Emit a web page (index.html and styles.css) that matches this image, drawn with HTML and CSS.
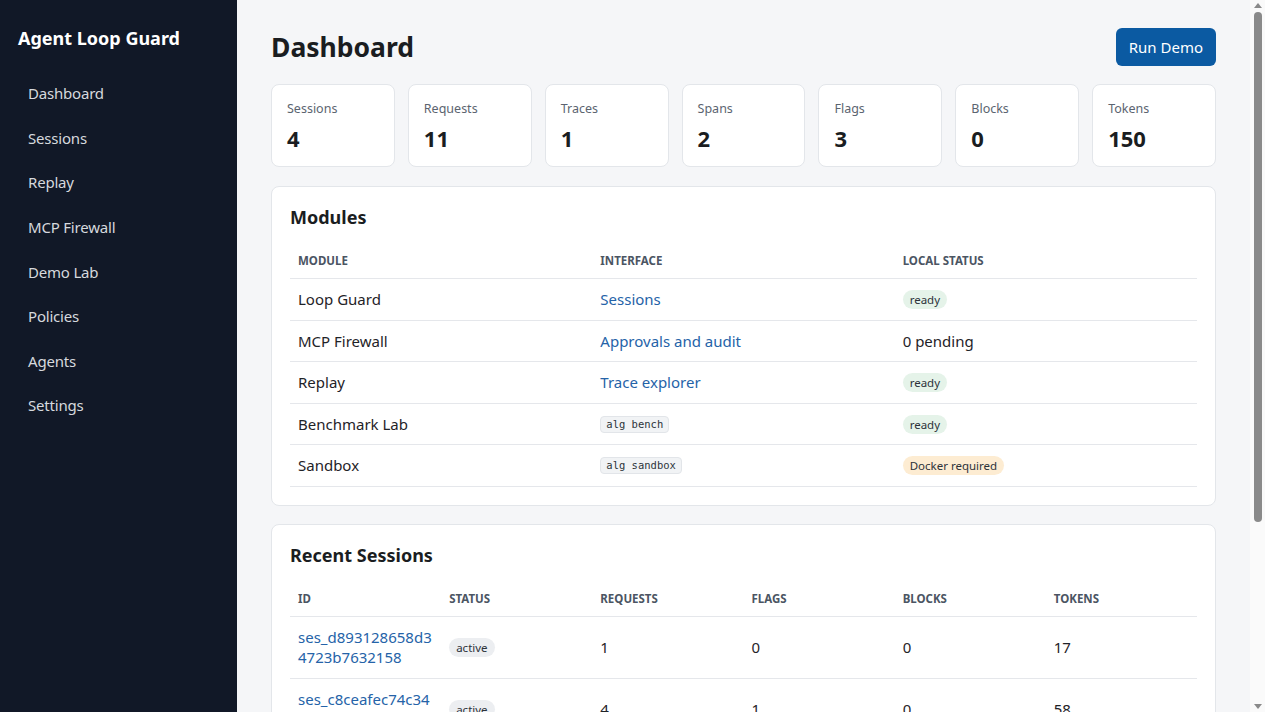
FILE: index.html
```html
<!DOCTYPE html>
<html lang="en">
<head>
    <meta charset="UTF-8">
    <meta name="viewport" content="width=device-width, initial-scale=1.0">
    <title>Agent Loop Guard</title>
    <link rel="stylesheet" href="styles.css">
</head>
<body>
    <div class="layout">
        <aside class="sidebar">
            <div class="brand">Agent Loop Guard</div>
            <nav class="nav">
                <a href="#">Dashboard</a>
                <a href="#">Sessions</a>
                <a href="#">Replay</a>
                <a href="#">MCP Firewall</a>
                <a href="#">Demo Lab</a>
                <a href="#">Policies</a>
                <a href="#">Agents</a>
                <a href="#">Settings</a>
            </nav>
        </aside>

        <main class="main">
            <div class="page-header">
                <h1>Dashboard</h1>
                <button type="button" class="btn">Run Demo</button>
            </div>

            <div class="stats">
                <div class="stat"><div class="stat-label">Sessions</div><div class="stat-value">4</div></div>
                <div class="stat"><div class="stat-label">Requests</div><div class="stat-value">11</div></div>
                <div class="stat"><div class="stat-label">Traces</div><div class="stat-value">1</div></div>
                <div class="stat"><div class="stat-label">Spans</div><div class="stat-value">2</div></div>
                <div class="stat"><div class="stat-label">Flags</div><div class="stat-value">3</div></div>
                <div class="stat"><div class="stat-label">Blocks</div><div class="stat-value">0</div></div>
                <div class="stat"><div class="stat-label">Tokens</div><div class="stat-value">150</div></div>
            </div>

            <section class="card">
                <h2>Modules</h2>
                <table class="table">
                    <thead>
                        <tr><th>Module</th><th>Interface</th><th>Local status</th></tr>
                    </thead>
                    <tbody>
                        <tr><td>Loop Guard</td><td><a href="#">Sessions</a></td><td><span class="badge ok">ready</span></td></tr>
                        <tr><td>MCP Firewall</td><td><a href="#">Approvals and audit</a></td><td>0 pending</td></tr>
                        <tr><td>Replay</td><td><a href="#">Trace explorer</a></td><td><span class="badge ok">ready</span></td></tr>
                        <tr><td>Benchmark Lab</td><td><code>alg bench</code></td><td><span class="badge ok">ready</span></td></tr>
                        <tr><td>Sandbox</td><td><code>alg sandbox</code></td><td><span class="badge warn">Docker required</span></td></tr>
                    </tbody>
                </table>
            </section>

            <section class="card">
                <h2>Recent Sessions</h2>
                <table class="table sessions">
                    <thead>
                        <tr><th>ID</th><th>Status</th><th>Requests</th><th>Flags</th><th>Blocks</th><th>Tokens</th></tr>
                    </thead>
                    <tbody>
                        <tr><td class="id"><a href="#">ses_d893128658d34723b7632158</a></td><td><span class="badge">active</span></td><td>1</td><td>0</td><td>0</td><td>17</td></tr>
                        <tr><td class="id"><a href="#">ses_c8ceafec74c34f9a81d2e6b0</a></td><td><span class="badge">active</span></td><td>4</td><td>1</td><td>0</td><td>58</td></tr>
                        <tr><td class="id"><a href="#">ses_5a7e09d41bc24e3f90a6c771</a></td><td><span class="badge">active</span></td><td>3</td><td>1</td><td>0</td><td>42</td></tr>
                        <tr><td class="id"><a href="#">ses_91f2b6c08e4d47a5b3e1d09c</a></td><td><span class="badge">active</span></td><td>3</td><td>1</td><td>0</td><td>33</td></tr>
                    </tbody>
                </table>
            </section>
        </main>
    </div>

    <!-- stand-in for the browser's scrollbar -->
    <div class="scrollbar">
        <span class="arrow up"></span>
        <span class="thumb"></span>
        <span class="arrow down"></span>
    </div>
</body>
</html>
```

FILE: styles.css
```css
* {
    box-sizing: border-box;
}

body {
    margin: 0;
    padding-right: 15px;
    font-family: "Noto Sans", "Open Sans", sans-serif;
    background: #f5f6f8;
    color: #1f2328;
}

.layout {
    display: flex;
    min-height: 100vh;
}

.sidebar {
    width: 237px;
    flex-shrink: 0;
    background: #111827;
    padding: 26px 18px;
    position: sticky;
    top: 0;
    height: 100vh;
}

.brand {
    color: #fff;
    font-size: 18px;
    font-weight: 700;
    line-height: 24px;
    margin-bottom: 21px;
}

.nav {
    display: flex;
    flex-direction: column;
}

.nav a {
    color: #d6d9de;
    text-decoration: none;
    font-size: 15px;
    line-height: 22px;
    padding: 11.3px 10px;
    letter-spacing: -0.2px;
}

.main {
    flex: 1;
    min-width: 0;
    padding: 28px 34px 34px;
}

.page-header {
    display: flex;
    justify-content: space-between;
    align-items: center;
    margin-bottom: 18px;
}

h1 {
    margin: 0;
    font-size: 26.5px;
    font-weight: 700;
    color: #1a1d21;
}

.btn {
    background: #0b5aa2;
    color: #fff;
    border: none;
    border-radius: 6px;
    font-family: inherit;
    font-size: 15px;
    height: 38px;
    padding: 0 13px;
    cursor: pointer;
}

.stats {
    display: grid;
    grid-template-columns: repeat(7, 1fr);
    gap: 13px;
    margin-bottom: 19px;
}

.stat {
    background: #fff;
    border: 1px solid #e3e6ea;
    border-radius: 8px;
    padding: 15px 15px 14px;
}

.stat-label {
    font-size: 12.5px;
    line-height: 18px;
    color: #5b6470;
    margin-bottom: 6px;
}

.stat-value {
    font-size: 22px;
    line-height: 28px;
    font-weight: 700;
    color: #1a1d21;
}

.card {
    background: #fff;
    border: 1px solid #e3e6ea;
    border-radius: 8px;
    padding: 18px;
    margin-bottom: 18px;
}

h2 {
    margin: 0 0 14px;
    font-size: 18px;
    line-height: 24px;
    font-weight: 700;
    color: #1a1d21;
}

.table {
    width: 100%;
    border-collapse: collapse;
    table-layout: fixed;
}

.table th {
    text-align: left;
    font-size: 11.5px;
    line-height: 15px;
    font-weight: 700;
    text-transform: uppercase;
    color: #4b5563;
    padding: 10px 8px;
    border-bottom: 1px solid #e5e7eb;
}

.table td {
    font-size: 15px;
    line-height: 20.5px;
    padding: 10px 8px;
    border-bottom: 1px solid #e5e7eb;
    vertical-align: middle;
}

.table a {
    color: #2563a8;
    text-decoration: none;
}

.sessions td.id {
    word-break: break-all;
}

.badge {
    display: inline-block;
    vertical-align: top;
    font-size: 11.5px;
    line-height: 15px;
    padding: 2px 7px;
    margin-top: 1px;
    border-radius: 999px;
    background: #eceef1;
    color: #2d333a;
}

.badge.ok {
    background: #e5f3e9;
}

.badge.warn {
    background: #fdecd2;
}

code {
    display: inline-block;
    vertical-align: top;
    margin-top: 2px;
    font-family: "DejaVu Sans Mono", "Liberation Mono", monospace;
    font-size: 10.5px;
    line-height: 13px;
    background: #f1f3f5;
    border: 1px solid #e2e5e9;
    border-radius: 4px;
    padding: 1px 5px;
    color: #2d333a;
}

.scrollbar {
    position: fixed;
    top: 0;
    right: 0;
    width: 15px;
    height: 100vh;
    background: #fafafa;
    display: flex;
    flex-direction: column;
    align-items: center;
}

.thumb {
    width: 8px;
    height: 510px;
    margin-top: 4px;
    border-radius: 4px;
    background: #8a8a8a;
}

.arrow {
    width: 0;
    height: 0;
    border-left: 4px solid transparent;
    border-right: 4px solid transparent;
}

.arrow.up {
    margin-top: 3px;
    border-bottom: 5px solid #8a8a8a;
}

.arrow.down {
    margin-top: auto;
    margin-bottom: 3px;
    border-top: 5px solid #8a8a8a;
}
```
